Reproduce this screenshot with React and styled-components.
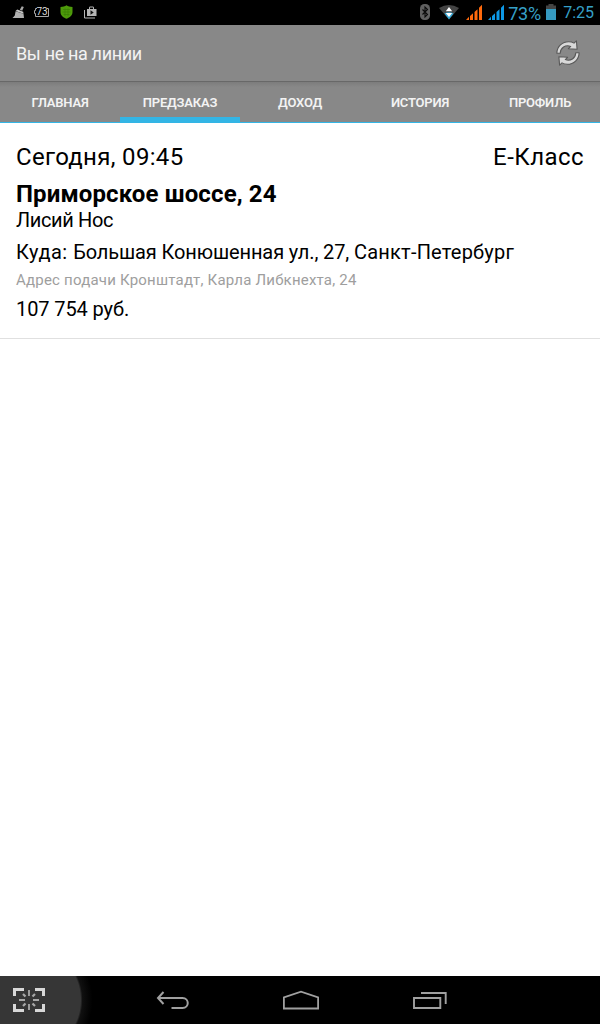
import React, { useState } from "react";
import styled, { createGlobalStyle } from "styled-components";

const TABS = ["ГЛАВНАЯ", "ПРЕДЗАКАЗ", "ДОХОД", "ИСТОРИЯ", "ПРОФИЛЬ"];

const ORDERS = [
    {
        id: 1,
        time: "Сегодня, 09:45",
        carClass: "E-Класс",
        address: "Приморское шоссе, 24",
        district: "Лисий Нос",
        street: "Большая Конюшенная ул., 27, ",
        city: "Санкт-Петербург",
        pickup: "Адрес подачи Кронштадт, Карла Либкнехта, 24",
        price: "107 754 руб.",
    },
];

const BroomIcon = () => (
    <svg width="13" height="14" viewBox="0 0 13 14">
        <path d="M9.800 1.200l2 .9-1.600 3.600-2.400-1z" fill="#a8a8a8" />
        <path d="M5.200 4.400l6 2.300.300 2-7.900-2.600z" fill="#c4c4c4" />
        <path d="M3.600 6.200l7.900 2.600.500 4.200H.5l2.300-2.400z" fill="#b0b0b0" />
    </svg>
);

const BatteryBadgeIcon = () => (
    <svg width="16" height="12" viewBox="0 0 16 12">
        <path
            d="M3 2.500H1.500v2H.5v3h1v3h13v-8H13"
            fill="none"
            stroke="#a8a8a8"
        />
        <text
            x="8"
            y="9"
            fill="#dcdcdc"
            fontFamily="Roboto, sans-serif"
            fontSize="10"
            textAnchor="middle"
        >
            73
        </text>
    </svg>
);

const ShieldIcon = () => (
    <svg width="13" height="14" viewBox="0 0 13 14">
        <path
            d="M6.500 .3C5 1.500 2.800 2 .5 2v5c0 3.300 2.400 5.400 6 6.700 3.600-1.300 6-3.400 6-6.700V2C10.200 2 8 1.500 6.500.3z"
            fill="#4d9a0a"
        />
        <path
            d="M3 4.500h7M2.500 7h8M3.500 9.500h6M5 3.500v7.500M8 3.500v7.500"
            stroke="#2e6d05"
            strokeWidth=".7"
            opacity=".6"
        />
    </svg>
);

const StoreIcon = () => (
    <svg width="13" height="14" viewBox="0 0 13 14">
        <path
            d="M3 4h2V2.500L5.800 1.500h3.400l.8 1V4h2.500v7H3zM6 4h3V2.500H6z"
            fill="#b5b5b5"
            fillRule="evenodd"
        />
        <path d="M6.500 5.300L9.700 7.500 6.500 9.700z" fill="#111" />
        <path d="M.5 5v8H11" fill="none" stroke="#b5b5b5" />
    </svg>
);

const BluetoothIcon = () => (
    <svg width="10" height="16" viewBox="0 0 10 16">
        <rect x="0" y="0" width="10" height="16" rx="4.500" fill="#606060" />
        <path
            d="M2.500 5.500l5 5L5 13V3l2.500 2.500-5 5"
            fill="none"
            stroke="#0a0a0a"
            strokeWidth="1.100"
        />
    </svg>
);

const WifiIcon = () => (
    <svg width="20" height="16" viewBox="0 0 20 16">
        <path d="M0 4Q10-2 20 4L10 15.500z" fill="#444" />
        <path d="M5.500 9.500Q10 7 14.500 9.500L10 15.500z" fill="#33a8d6" />
        <path
            d="M10 3l3.200 4.200H6.800zM10 13L6.800 9h6.400z"
            fill="#fff"
        />
    </svg>
);

const SignalIcon = ({ color }) => (
    <svg width="16" height="16" viewBox="0 0 16 16" fill={color}>
        <path d="M0 16L3 12.800V16zM4 12L7 9.200V16H4zM8.500 8L11.500 5.200V16H8.500zM13 3.700L16 .7V16H13z" />
    </svg>
);

const BatteryIcon = () => (
    <svg width="10" height="16" viewBox="0 0 10 16">
        <path d="M2.500 0h5v1.500H10V5H0V1.500h2.500z" fill="#444" />
        <path d="M0 5h10v11H0z" fill="#3599bf" />
    </svg>
);

const ARROW =
    "M.9 13.200C.9 6.500 6.300 1.700 12.700 1.700c2 0 3.900.5 5.300 1.400L20.400.8l.7 8.400-8.700-.5 2.300-2.300c-5.300-2-10.200 1.400-10.500 6.900z";

const RefreshIcon = () => (
    <svg
        width="24"
        height="26"
        viewBox="0 0 24 26"
        fill="#d9d9d9"
        stroke="#585858"
        strokeWidth="1.1"
        strokeLinejoin="round"
    >
        <path d={ARROW} />
        <path d={ARROW} transform="rotate(180 12 13)" />
    </svg>
);

const CaptureIcon = () => (
    <svg width="32" height="24" viewBox="0 0 32 24" fill="none">
        <path
            d="M1.500 8V1.500H11M22 1.500h8.500V8M30.500 16v6.500H22M11 22.500H1.500V16"
            stroke="#d8d8d8"
            strokeWidth="3"
        />
        <path
            d="M16 2v6M16 16v6M6 12h6M20 12h6"
            stroke="#a8a8a8"
            strokeWidth="1.800"
        />
        <path
            d="M10 6l2.500 2.500M22 6l-2.500 2.500M10 18l2.500-2.500M22 18l-2.500-2.500"
            stroke="#a8a8a8"
            strokeWidth="2.200"
        />
    </svg>
);

const BackIcon = () => (
    <svg
        width="34"
        height="20"
        viewBox="0 0 34 20"
        fill="none"
        stroke="#a0a0a0"
        strokeWidth="2"
    >
        <path d="M7.500 2L2 8l5.500 6M2 8h24.500c7 0 7 10 0 10H15.500" />
    </svg>
);

const HomeIcon = () => (
    <svg
        width="36"
        height="20"
        viewBox="0 0 36 20"
        fill="none"
        stroke="#a0a0a0"
        strokeWidth="1.8"
    >
        <path d="M.9 18.500V7.500L18 1.700 35.100 7.500v11z" />
    </svg>
);

const RecentIcon = () => (
    <svg
        width="34"
        height="18"
        viewBox="0 0 34 18"
        fill="none"
        stroke="#a0a0a0"
        strokeWidth="1.9"
    >
        <path d="M1 7h26.300V17H1zM8 2h24.700v11" />
    </svg>
);

const App = () => {
    const [active, setActive] = useState(1);

    return (
        <>
            <GlobalStyle />
            <Screen>
                <StatusBar>
                    <Notifications>
                        <BroomIcon />
                        <BatteryBadgeIcon />
                        <ShieldIcon />
                        <StoreIcon />
                    </Notifications>
                    <SystemIcons>
                        <BluetoothIcon />
                        <WifiIcon />
                        <SignalIcon color="#ff6a0d" />
                        <SignalIcon color="#0d98e6" />
                        <Percent>73%</Percent>
                        <BatteryIcon />
                        <Clock>7:25</Clock>
                    </SystemIcons>
                </StatusBar>
                <Header>
                    <Title>Вы не на линии</Title>
                    <RefreshButton>
                        <RefreshIcon />
                    </RefreshButton>
                </Header>
                <TabBar>
                    {TABS.map((tab, idx) => (
                        <Tab
                            key={tab}
                            $active={idx === active}
                            onClick={() => setActive(idx)}
                        >
                            {tab}
                        </Tab>
                    ))}
                </TabBar>
                <OrderList>
                    {ORDERS.map((order) => (
                        <Order key={order.id}>
                            <OrderTop>
                                <span>{order.time}</span>
                                <CarClass>{order.carClass}</CarClass>
                            </OrderTop>
                            <Address>{order.address}</Address>
                            <District>{order.district}</District>
                            <Destination>
                                <Label>Куда: </Label>
                                <Street>{order.street}</Street>
                                <City>{order.city}</City>
                            </Destination>
                            <Pickup>{order.pickup}</Pickup>
                            <Price>{order.price}</Price>
                        </Order>
                    ))}
                </OrderList>
                <NavBar>
                    <CaptureButton>
                        <CaptureIcon />
                    </CaptureButton>
                    <NavButtons>
                        <BackIcon />
                        <HomeIcon />
                        <RecentIcon />
                    </NavButtons>
                </NavBar>
            </Screen>
        </>
    );
};

export default App;

const GlobalStyle = createGlobalStyle`
    * {
        box-sizing: border-box;
    }
    body {
        margin: 0;
        background: #fff;
        font-family: Roboto, "Liberation Sans", sans-serif;
    }
    svg {
        display: block;
        flex: none;
    }
`;

const Screen = styled.div`
    display: flex;
    flex-direction: column;
    height: 1024px;
    width: 600px;
    overflow: hidden;
    color: #000;
`;

const StatusBar = styled.div`
    display: flex;
    justify-content: space-between;
    height: 25px;
    padding: 0 6px 1px 12px;
    background: #000;
`;

const Notifications = styled.div`
    display: flex;
    align-items: center;
    gap: 10px;

    svg:nth-child(2) {
        margin-left: -1px;
    }
    svg:nth-child(4) {
        margin-left: 1px;
    }
`;

const SystemIcons = styled.div`
    display: flex;
    align-items: center;
    gap: 6px;
    color: #36a0c8;

    svg:nth-child(1) {
        margin-right: 3px;
    }
    svg:nth-child(2) {
        margin-right: 1px;
    }
`;

const Percent = styled.span`
    width: 32px;
    height: 24px;
    margin-left: -2px;
    font-size: 18px;
    letter-spacing: -0.2px;
    line-height: 27px;
    white-space: nowrap;
`;

const Clock = styled.span`
    height: 24px;
    margin-left: 1px;
    font-size: 16px;
    line-height: 26px;
    white-space: nowrap;
`;

const Header = styled.header`
    display: flex;
    justify-content: space-between;
    align-items: center;
    height: 57px;
    padding: 0 20px 0 16px;
    background: #888;
    border-bottom: 1px solid #686868;
`;

const Title = styled.h1`
    margin: 0;
    padding-top: 2px;
    color: #f3f3f3;
    font-size: 18px;
    font-weight: 400;
    letter-spacing: -0.34px;
    line-height: 24px;
`;

const RefreshButton = styled.button`
    padding: 0;
    border: 0;
    background: none;
    cursor: pointer;
`;

const TabBar = styled.nav`
    display: grid;
    grid-template-columns: repeat(5, 1fr);
    height: 41px;
    background: linear-gradient(#7c7c7c, #888 5px);
    box-shadow: inset 0 -1px 0 #33b5e5;
`;

const Tab = styled.button`
    padding: 5px 0 0;
    border: 0;
    border-bottom: ${({ $active }) =>
        $active ? "6px solid #33b5e5" : "6px solid transparent"};
    background: none;
    color: #f3f3f3;
    font-family: inherit;
    font-size: 13px;
    font-weight: 600;
    letter-spacing: -0.2px;
    cursor: pointer;
`;

const OrderList = styled.main`
    flex: 1;
    background: #fff;
`;

const Order = styled.article`
    display: flex;
    flex-direction: column;
    height: 216px;
    padding: 20px 16px 0;
    border-bottom: 1px solid #e0e0e0;
    white-space: nowrap;
`;

const OrderTop = styled.div`
    display: flex;
    justify-content: space-between;
    font-size: 24px;
    letter-spacing: 0.32px;
    line-height: 28px;
`;

const CarClass = styled.span`
    letter-spacing: 0.45px;
`;

const Address = styled.div`
    margin-top: 9px;
    font-size: 24px;
    font-weight: 700;
    letter-spacing: 0.13px;
    line-height: 28px;
`;

const District = styled.div`
    font-size: 20px;
    letter-spacing: -0.35px;
    line-height: 24px;
`;

const Destination = styled.div`
    margin-top: 8px;
    font-size: 20px;
    line-height: 24px;
`;

const Label = styled.span`
    letter-spacing: 0.5px;
`;

const Street = styled.span`
    letter-spacing: -0.11px;
`;

const City = styled.span`
    letter-spacing: 0.2px;
`;

const Pickup = styled.div`
    margin-top: 7px;
    color: #9e9e9e;
    font-size: 15px;
    letter-spacing: 0.21px;
    line-height: 18px;
`;

const Price = styled.div`
    margin-top: 8px;
    font-size: 20px;
    letter-spacing: -0.1px;
    line-height: 24px;
`;

const NavBar = styled.footer`
    display: flex;
    height: 48px;
    background: #000;
`;

const CaptureButton = styled.div`
    display: flex;
    align-items: center;
    width: 96px;
    padding-left: 13px;
    background: radial-gradient(
        circle at 26.5px 24px,
        #363636 54px,
        #101010 56px,
        #000 66px
    );
`;

const NavButtons = styled.div`
    display: flex;
    align-items: center;
    gap: 93px;
    padding-left: 60px;

    svg:last-child {
        margin-left: 1px;
    }
`;
